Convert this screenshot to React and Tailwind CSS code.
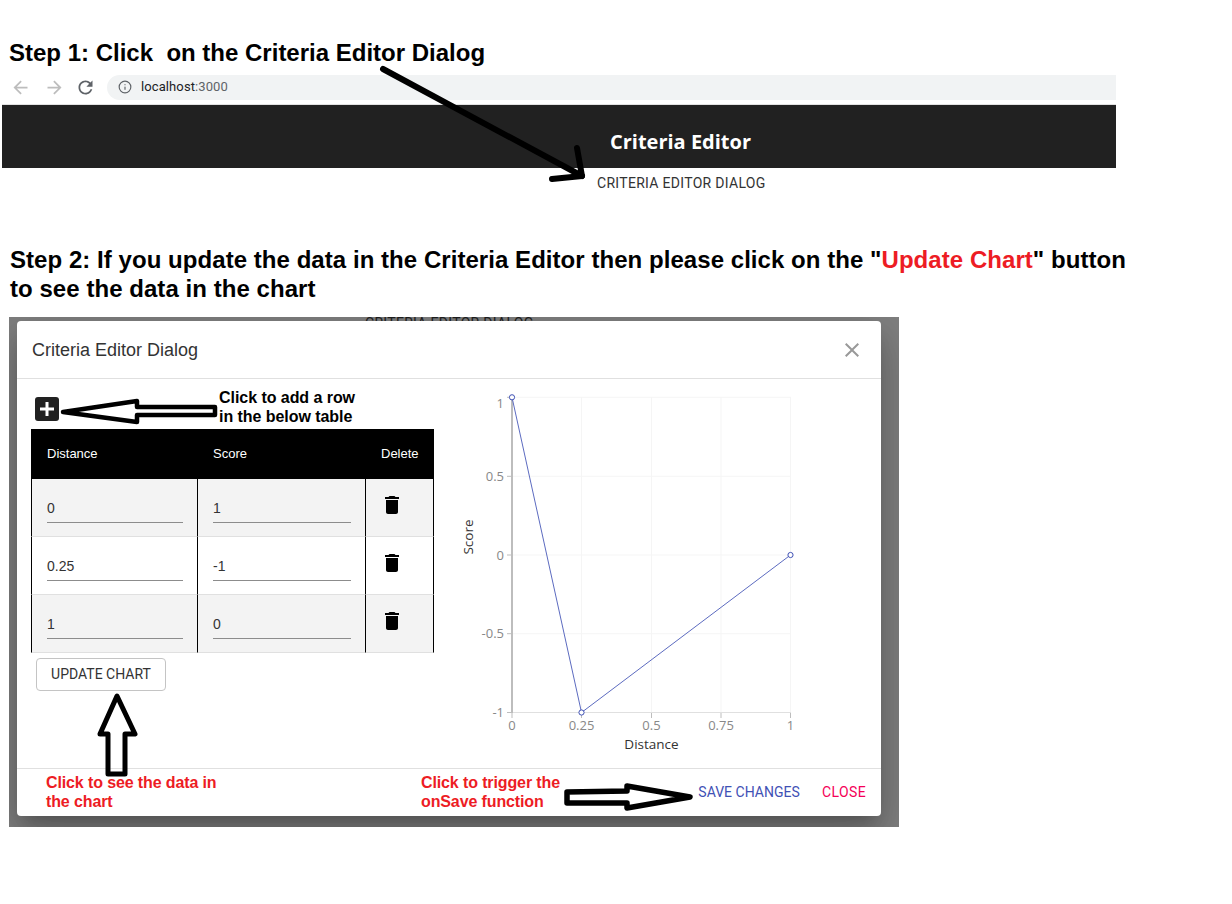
import { Info } from 'lucide-react';

const ARROW_PATH = 'M20 11H7.83l5.59-5.59L12 4l-8 8 8 8 1.41-1.41L7.83 13H20v-2z';
const RELOAD_PATH =
  'M17.65 6.35C16.2 4.9 14.21 4 12 4c-4.42 0-7.99 3.58-7.99 8s3.57 8 7.99 8c3.73 0 6.84-2.55 7.73-6h-2.08c-.82 2.33-3.04 4-5.65 4-3.31 0-6-2.69-6-6s2.69-6 6-6c1.66 0 3.14.69 4.22 1.78L13 11h7V4l-2.35 2.35z';

const rows = [
  { distance: '0', score: '1' },
  { distance: '0.25', score: '-1' },
  { distance: '1', score: '0' },
];

function Icon({ d, className }) {
  return (
    <svg viewBox="0 0 24 24" className={className} fill="currentColor">
      <path d={d} />
    </svg>
  );
}

function Chart() {
  // coordinates are page pixels minus the svg origin (450, 380)
  const xs = [62, 131.5, 201.5, 271, 340.5];
  const ys = [17.3, 96.3, 175, 253.7, 332.5];
  const yLabels = [
    ['1', 23],
    ['0.5', 96.3],
    ['0', 175],
    ['-0.5', 253.7],
    ['-1', 332.5],
  ];
  const xLabels = ['0', '0.25', '0.5', '0.75', '1'];
  return (
    <svg width="380" height="385" className="mt-[1px] ml-[16px] shrink-0 font-['Open_Sans',sans-serif]">
      {xs.slice(1).map(x => (
        <line key={x} x1={x} x2={x} y1="17" y2="332" stroke="#f5f5f5" />
      ))}
      {ys.slice(0, 4).map(y => (
        <line key={y} x1="62" x2="341" y1={y} y2={y} stroke="#f5f5f5" />
      ))}
      <line x1="62" x2="341" y1="332.5" y2="332.5" stroke="#e0e0e0" />
      <line x1="62" x2="62" y1="17" y2="333" stroke="#bdbdbd" strokeWidth="2" />
      {ys.map(y => (
        <line key={y} x1="57" x2="62" y1={y} y2={y} stroke="#bdbdbd" />
      ))}
      {xs.map(x => (
        <line key={x} x1={x} x2={x} y1="333" y2="338" stroke="#bdbdbd" />
      ))}
      {yLabels.map(([label, y]) => (
        <text key={label} x="54" y={y} dy="4.5" textAnchor="end" fontSize="13" fill="#888888">
          {label}
        </text>
      ))}
      {xLabels.map((label, i) => (
        <text key={label} x={xs[i]} y="350" textAnchor="middle" fontSize="13" fill="#888888">
          {label}
        </text>
      ))}
      <text x="201.5" y="369" textAnchor="middle" fontSize="13.5" fill="#333333">
        Distance
      </text>
      <text transform="translate(22.5 157) rotate(-90)" textAnchor="middle" fontSize="13.5" fill="#333333">
        Score
      </text>
      <polyline points="62,17.3 131.5,332.5 340.5,175" fill="none" stroke="#5c6bc0" />
      {[[62, 17.3], [131.5, 332.5], [340.5, 175]].map(([cx, cy]) => (
        <circle key={cx} cx={cx} cy={cy} r="2.6" fill="#ffffff" stroke="#3f51b5" />
      ))}
    </svg>
  );
}

function Dialog() {
  return (
    <div className="relative mt-[4px] ml-[8px] w-[864px] h-[495px] bg-white rounded flex flex-col shadow-[0_11px_15px_-7px_rgba(0,0,0,0.2),0_24px_38px_3px_rgba(0,0,0,0.14),0_9px_46px_8px_rgba(0,0,0,0.12)]">
      {/* Header */}
      <div className="h-[58px] shrink-0 border-b border-[#e0e0e0] pl-[15px] pr-[17px] flex items-center justify-between">
        <span className="pt-[2px] text-[18px] text-[#333333]">Criteria Editor Dialog</span>
        <Icon
          d="M19 6.41L17.59 5 12 10.59 6.41 5 5 6.41 10.59 12 5 17.59 6.41 19 12 13.41 17.59 19 19 17.59 13.41 12z"
          className="w-6 h-6 text-[#999999]"
        />
      </div>

      {/* Body */}
      <div className="h-[389px] shrink-0 flex">
        <div className="w-[417px] shrink-0 pl-[14px]">
          <div className="flex items-start h-[41px] mt-[9px]">
            <div className="mt-[9px] ml-[4px] w-6 h-6 rounded-[3px] bg-[#212121] text-white flex items-center justify-center">
              <Icon d="M19 13.5h-5.5V19h-3v-5.5H5v-3h5.5V5h3v5.5H19z" className="w-6 h-6" />
            </div>
            <p className="ml-[160px] text-[16px] leading-[19px] font-bold tracking-[-0.05px] text-black">
              Click to add a row
              <br />
              in the below table
            </p>
          </div>

          <table className="w-[403px] table-fixed border-separate border-spacing-0 text-[14px] text-[#333333]">
            <colgroup>
              <col className="w-[166px]" />
              <col className="w-[168px]" />
              <col className="w-[69px]" />
            </colgroup>
            <thead>
              <tr className="h-[50px] bg-black text-white text-[13px] text-left">
                <th className="font-normal pl-[16px]">Distance</th>
                <th className="font-normal pl-[16px]">Score</th>
                <th className="font-normal pl-[16px]">Delete</th>
              </tr>
            </thead>
            <tbody>
              {rows.map((row, i) => (
                <tr key={row.distance} className={`h-[58px] ${i % 2 === 0 ? 'bg-[#f3f3f3]' : 'bg-white'}`}>
                  <td className="align-top border-b border-b-[#e0e0e0] border-l border-l-black pl-[15px] pr-[14px] pt-[20px]">
                    <div className="h-[24px] leading-[18px] border-b border-[#8c8c8c]">{row.distance}</div>
                  </td>
                  <td className="align-top border-b border-b-[#e0e0e0] border-l border-l-black pl-[15px] pr-[14px] pt-[20px]">
                    <div className="h-[24px] leading-[18px] border-b border-[#8c8c8c]">{row.score}</div>
                  </td>
                  <td className="align-top border-b border-b-[#e0e0e0] border-l border-l-black border-r border-r-black pl-[14px] pt-[14px]">
                    <Icon
                      d="M6 19c0 1.1.9 2 2 2h8c1.1 0 2-.9 2-2V7H6v12zM19 4h-3.5l-1-1h-5l-1 1H5v2h14V4z"
                      className="w-6 h-6 text-black"
                    />
                  </td>
                </tr>
              ))}
            </tbody>
          </table>

          <button className="mt-[5px] ml-[5px] w-[130px] h-[33px] border border-[#c4c4c4] rounded font-['Roboto',sans-serif] text-[14px] text-[#333333]">
            UPDATE CHART
          </button>
        </div>
        <Chart />
      </div>

      {/* Footer */}
      <div className="flex-1 border-t border-[#e0e0e0] pl-[29px] pr-[15px] flex items-center font-bold text-[16px] leading-[19px] tracking-[-0.12px] text-[#ed1c24]">
        <p className="w-[375px] mb-[2px]">
          Click to see the data in
          <br />
          the chart
        </p>
        <p className="mb-[2px]">
          Click to trigger the
          <br />
          onSave function
        </p>
        <div className="ml-auto flex gap-[22px] font-['Roboto',sans-serif] font-normal text-[14px]">
          <span className="text-[#3f51b5] tracking-[0.02px]">SAVE CHANGES</span>
          <span className="text-[#f50057] tracking-[0.4px]">CLOSE</span>
        </div>
      </div>
    </div>
  );
}

export default function App() {
  return (
    <div className="relative w-[1232px] h-[904px] overflow-hidden bg-white font-['Liberation_Sans',Arial,sans-serif]">
      <h2 className="pt-[38px] pl-[9px] text-[24px] leading-[29px] font-bold text-black whitespace-pre">
        Step 1: Click  on the Criteria Editor Dialog
      </h2>

      {/* Browser toolbar */}
      <div className="mt-[8px] ml-[2px] w-[1114px] h-[25px] flex items-center">
        <Icon d={ARROW_PATH} className="ml-[7.5px] w-[21px] h-[21px] text-[#bdbdbd]" />
        <Icon d={ARROW_PATH} className="ml-[13px] w-[21px] h-[21px] text-[#bdbdbd] rotate-180" />
        <Icon d={RELOAD_PATH} className="ml-[10px] w-[21px] h-[21px] text-[#5f6368]" />
        <div className="ml-[11.5px] flex-1 h-full rounded-l-full bg-[#f1f3f4] flex items-center pl-[11px] pb-[1px] font-['Roboto',sans-serif] text-[13px] text-[#202124]">
          <Info className="w-[14px] h-[14px] text-[#5f6368]" />
          <span className="ml-[9px] tracking-[0.1px]">
            localhost<span className="text-[#5f6368]">:3000</span>
          </span>
        </div>
      </div>

      {/* App bar */}
      <div className="mt-[4px] ml-[2px] w-[1114px] h-[64px] border-t border-[#e2e2e2] bg-[#212121] flex items-center pl-[608px] pt-[10px]">
        <span className="font-['Open_Sans',sans-serif] font-bold text-[20px] text-white">Criteria Editor</span>
      </div>
      <div className="ml-[597px] mt-[7px] h-[16px] leading-[16px] font-['Roboto',sans-serif] text-[14px] text-[#333333] tracking-[0.3px]">
        CRITERIA EDITOR DIALOG
      </div>

      <h2 className="mt-[54px] ml-[10px] w-[1150px] text-[24px] leading-[29px] font-bold tracking-[0.05px] text-black">
        Step 2: If you update the data in the Criteria Editor then please click on the "
        <span className="text-[#ed1c24]">Update Chart</span>" button
        <br />
        to see the data in the chart
      </h2>

      {/* Modal over the dimmed page */}
      <div className="mt-[14px] ml-[9px] w-[890px] h-[510px] relative overflow-hidden bg-[#808080]">
        <div className="absolute left-[356px] top-[-2px] leading-[16px] font-['Roboto',sans-serif] text-[14px] text-[#1f1f1f] tracking-[0.3px]">
          CRITERIA EDITOR DIALOG
        </div>
        <Dialog />
      </div>

      {/* Hand drawn annotation arrows */}
      <svg className="absolute inset-0 pointer-events-none" width="1232" height="904" fill="none" stroke="#000000" strokeLinejoin="round" strokeLinecap="round">
        <path d="M383 69 L582 176" strokeWidth="6" />
        <path d="M577 148 L582 176 L552 179" strokeWidth="6" />
        <path d="M63 412 L137 401 L137 407 L215 407 L215 415 L137 415 L137 422 Z" strokeWidth="4.5" />
        <path d="M117 696 L135 734 L125 734 L125 774 L108 774 L108 734 L100 734 Z" strokeWidth="5" />
        <path d="M567 792 L627 791 L627 786 L690 797 L627 808 L627 803 L567 803 Z" strokeWidth="5.5" />
      </svg>
    </div>
  );
}
